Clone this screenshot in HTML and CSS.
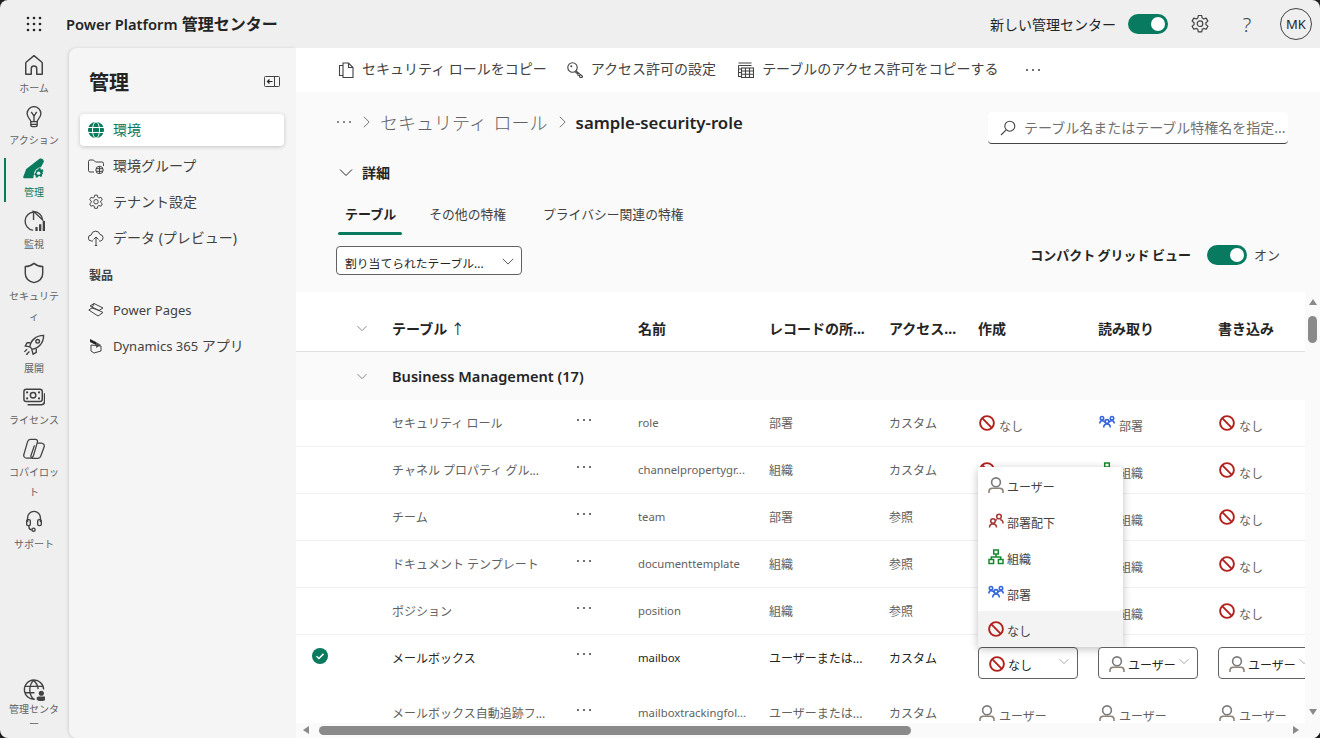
FILE: index.html
```html
<!DOCTYPE html>
<html>
<head>
  <title>Power Platform 管理センター</title>
  <link rel="stylesheet" href="styles.css">
</head>
<body>
  <svg class="icon-defs" width="0" height="0">
    <symbol id="ic-none" viewBox="0 0 16 16">
      <circle cx="8" cy="8" r="6.900" fill="none" stroke="#b3201c" stroke-width="1.900"/>
      <path d="M3.200 3.200l9.600 9.600" stroke="#b3201c" stroke-width="1.900"/>
    </symbol>
    <symbol id="ic-user" viewBox="0 0 16 16">
      <circle cx="8" cy="5.300" r="4.400" fill="none" stroke="#7a7a7a" stroke-width="1.600"/>
      <path d="M1 16v-1.500c0-2 1.400-3.300 3.200-3.300h7.600c1.800 0 3.200 1.300 3.200 3.300V16" fill="none" stroke="#8f8378" stroke-width="1.600"/>
    </symbol>
    <symbol id="ic-unit" viewBox="0 0 16 16">
      <g fill="none" stroke="#3566dc" stroke-width="1.600">
        <circle cx="3" cy="3.200" r="1.700"/><circle cx="13" cy="3.200" r="1.700"/><circle cx="8" cy="6.500" r="1.900"/>
        <path d="M.8 8.500c0-1.500.6-2.700 2.200-2.700 1.100 0 2 .5 3.200 1.100M15.200 8.500c0-1.500-.6-2.700-2.200-2.700-1.100 0-2 .5-3.200 1.100M4.700 12.500c0-2 1.300-3.500 3.300-3.500s3.300 1.500 3.300 3.500"/>
      </g>
    </symbol>
    <symbol id="ic-sub" viewBox="0 0 16 16">
      <g fill="none" stroke="#a83a3a" stroke-width="1.600">
        <circle cx="11" cy="3.500" r="2.300"/><circle cx="5" cy="8" r="2.300"/>
        <path d="M9 6.800c-.5 0-1 .2-1.300.5M15 10.500c0-2-1-3.700-2.800-3.700M1.500 14.500c0-2 1.400-3.500 3.500-3.500s3.500 1.500 3.500 3.500"/>
      </g>
    </symbol>
    <symbol id="ic-org" viewBox="0 0 16 16">
      <g fill="none" stroke="#17882f" stroke-width="1.500">
        <rect x="5.700" y="1" width="4.600" height="4"/><rect x="1" y="10.500" width="4.600" height="4"/><rect x="10.400" y="10.500" width="4.600" height="4"/>
        <path d="M8 5v3M3.300 10.500V8h9.400v2.500"/>
      </g>
    </symbol>
    <symbol id="ic-chevron" viewBox="0 0 16 16">
      <path d="M2 5.500l6 6 6-6" fill="none" stroke="currentColor" stroke-width="1"/>
    </symbol>
    <symbol id="ic-dots" viewBox="0 0 16 4">
      <circle cx="2" cy="2" r="1" fill="currentColor"/><circle cx="8" cy="2" r="1" fill="currentColor"/><circle cx="14" cy="2" r="1" fill="currentColor"/>
    </symbol>
    <symbol id="ic-gear" viewBox="0 0 20 20">
      <path d="M8.300 1.500h3.400l.5 2.600 1.500.9 2.500-.9 1.700 3-2 1.700v1.800l2 1.700-1.700 3-2.500-.9-1.500.9-.5 2.600H8.300l-.5-2.600-1.500-.9-2.500.9-1.700-3 2-1.700V8.800l-2-1.700 1.700-3 2.500.9 1.500-.9z" fill="none" stroke="currentColor" stroke-width="1.200" stroke-linejoin="round"/>
      <circle cx="10" cy="9.700" r="2.800" fill="none" stroke="currentColor" stroke-width="1.200"/>
    </symbol>
  </svg>

  <div class="shell">
    <header class="top-bar">
      <svg class="launcher" viewBox="0 0 16 16" width="16" height="16" fill="#242424">
        <circle cx="2" cy="2" r="1.300"/><circle cx="8" cy="2" r="1.300"/><circle cx="14" cy="2" r="1.300"/>
        <circle cx="2" cy="8" r="1.300"/><circle cx="8" cy="8" r="1.300"/><circle cx="14" cy="8" r="1.300"/>
        <circle cx="2" cy="14" r="1.300"/><circle cx="8" cy="14" r="1.300"/><circle cx="14" cy="14" r="1.300"/>
      </svg>
      <div class="app-title"><span class="app-brand">Power Platform</span> 管理センター</div>
      <div class="top-right">
        <span class="top-label">新しい管理センター</span>
        <span class="toggle"></span>
        <svg class="top-gear" width="20" height="20"><use href="#ic-gear"/></svg>
        <span class="help">?</span>
        <span class="avatar">MK</span>
      </div>
    </header>

    <div class="body-row">
      <nav class="rail">
        <div class="rail-top">
          <a class="rail-item">
            <svg class="rail-icon" viewBox="0 0 24 24"><path d="M3 22V10.200a2 2 0 0 1 .7-1.500L12 1.800l8.300 6.900a2 2 0 0 1 .7 1.500V22h-6v-6a3 3 0 0 0-6 0v6z" fill="none" stroke="currentColor" stroke-width="1.600" stroke-linejoin="round"/></svg>
            <span>ホーム</span>
          </a>
          <a class="rail-item">
            <svg class="rail-icon" viewBox="0 0 24 24"><g fill="none" stroke="currentColor" stroke-width="1.500"><path d="M8.500 17c0-2.500-4-4-4-8.800a7.500 7.500 0 0 1 15 0c0 4.800-4 6.300-4 8.800z"/><path d="M8.500 17v3.500a2 2 0 0 0 2 2h3a2 2 0 0 0 2-2V17M12 16.500V11M9 6.500L12 11l3-4.500M8.500 20h7"/></g></svg>
            <span>アクション</span>
          </a>
          <a class="rail-item active">
            <svg class="rail-icon" viewBox="0 0 24 24"><path d="M18 .8c2.500-1.300 5.500 1 4.500 3.700L19.500 10c-3.500.2-7 3-7.500 7l-.8 5H1.500c-.9 0-1.500-.7-1.200-1.500l3.200-8.500z" fill="currentColor"/><path d="M17.500 10.800l1.700.4.400 1.600 1.700-.4 1.100 1.700-1.100 1.300.5 1.600-1.200 1.300.3 1.700-1.600.8-1.200-1.100-1.600.4-1 1.400-1.700-.6v-1.700l-1.500-.9.400-1.700 1.300-.9-.2-1.700 1.500-.9z" fill="currentColor"/><circle cx="17" cy="16.500" r="1.900" fill="#efefef"/></svg>
            <span>管理</span>
          </a>
          <a class="rail-item">
            <svg class="rail-icon" viewBox="0 0 24 24"><g fill="none" stroke="currentColor" stroke-width="1.500"><path d="M11.500 11V2.200A10 10 0 0 0 10.500 22h.5M11.500 1.500a10.500 10.500 0 0 1 10 9.500z"/></g><path d="M13.500 18.500h2.500V23h-2.500zM17.500 15.500H20V23h-2.500zM21.500 12H24v11h-2.500z" fill="currentColor"/></svg>
            <span>監視</span>
          </a>
          <a class="rail-item">
            <svg class="rail-icon" viewBox="0 0 24 24"><path d="M12 1.500c2.800 2.300 6 3.500 9.500 3.500v7.500c0 5-3.500 8.500-9.500 10-6-1.500-9.500-5-9.500-10V5C6 5 9.200 3.800 12 1.500z" fill="none" stroke="currentColor" stroke-width="1.600" stroke-linejoin="round"/></svg>
            <span>セキュリティ</span>
          </a>
          <a class="rail-item">
            <svg class="rail-icon" viewBox="0 0 24 24"><g fill="none" stroke="currentColor" stroke-width="1.500"><path d="M7.500 14C8 7.500 14 1.500 22.500 1.500c0 8.500-6 14.500-12.500 15z"/><circle cx="16" cy="8" r="2"/><path d="M8 9.500H4.500L2.500 13l5 1M14.500 16v4l-3.500 2-1.500-5.500"/><path d="M4.500 16.500L1.500 19.500M7 19l-3.500 3.500M5 21.500l-1 1"/></g></svg>
            <span>展開</span>
          </a>
          <a class="rail-item">
            <svg class="rail-icon" viewBox="0 0 24 24"><g fill="none" stroke="currentColor" stroke-width="1.600"><rect x="1" y="3.500" width="20" height="13.500" rx="2.500"/><circle cx="11" cy="10.200" r="3"/><path d="M23.500 8v9a3.500 3.500 0 0 1-3.500 3.500H5"/></g><circle cx="4.500" cy="7" r="1.200" fill="currentColor"/><circle cx="17.500" cy="7" r="1.200" fill="currentColor"/><circle cx="4.500" cy="13.500" r="1.200" fill="currentColor"/><circle cx="17.500" cy="13.500" r="1.200" fill="currentColor"/></svg>
            <span>ライセンス</span>
          </a>
          <a class="rail-item">
            <svg class="rail-icon" viewBox="0 0 24 24"><g fill="none" stroke="currentColor" stroke-width="1.400"><path d="M8 1.500h5.500c1.800 0 2.700 1.300 2.200 3L11.500 19c-.5 1.800-1.500 3-3.500 3H4c-2.300 0-3.700-2-3-4.200L5 4c.5-1.500 1.700-2.500 3-2.500z"/><path d="M15.500 5.500h4.500c2.300 0 3.800 2.200 3 4.400L19.300 20c-.5 1.300-1.500 2.200-3 2.200H11c-2 0-2.800-1.500-2.200-3.300L12.500 8"/></g></svg>
            <span>コパイロット</span>
          </a>
          <a class="rail-item">
            <svg class="rail-icon" viewBox="0 0 24 24"><g fill="none" stroke="currentColor" stroke-width="1.500"><path d="M5 13V8.500a7 7 0 0 1 14 0V13"/><rect x="4" y="10.500" width="4" height="6.500" rx="1.500"/><rect x="16" y="10.500" width="4" height="6.500" rx="1.500"/><path d="M6.500 17v1.500a3 3 0 0 0 3 3"/><circle cx="11.500" cy="21.500" r="1.700"/></g></svg>
            <span>サポート</span>
          </a>
        </div>
        <a class="rail-item rail-bottom">
          <svg class="rail-icon" viewBox="0 0 24 24"><g fill="none" stroke="currentColor" stroke-width="1.500"><path d="M13 22A10.500 10.500 0 1 1 22.500 11.500M1.500 8h21M1.500 15h11M11.500 1.500c-5.500 5.500-5.500 15 0 20.500M11.500 1.500c3 2.500 4.700 6 5 9.500"/></g><circle cx="20" cy="15.500" r="2.800" fill="currentColor"/><path d="M14.800 21.500c0-1.500 1-2.500 2.400-2.500h5.600c1.200 0 2.200 1 2.200 2.500S23 24 20 24s-5.200-1-5.200-2.500z" fill="currentColor"/></svg>
          <span>管理センター</span>
        </a>
      </nav>

      <aside class="side-nav">
        <div class="side-head">
          <h2>管理</h2>
          <svg class="collapse" viewBox="0 0 16 12" width="16" height="12"><rect x=".5" y=".5" width="15" height="10" rx="1" fill="none" stroke="#424242"/><path d="M10.500 0v11" stroke="#424242"/><path d="M8.500 5.500h-5M5.500 3.500l-2 2 2 2" fill="none" stroke="#242424" stroke-width="1.200"/></svg>
        </div>
        <a class="side-item selected">
          <svg viewBox="0 0 16 16" width="16" height="16"><circle cx="8" cy="8" r="8" fill="#0a7a5e"/><g fill="none" stroke="#fff" stroke-width="1"><path d="M0 5.500h16M0 10.500h16"/><ellipse cx="8" cy="8" rx="3.500" ry="8"/></g></svg>
          <span>環境</span>
        </a>
        <a class="side-item">
          <svg viewBox="0 0 16 16" width="16" height="16"><g fill="none" stroke="#424242" stroke-width="1"><path d="M6 14H2a1.500 1.500 0 0 1-1.500-1.500v-9A1.500 1.500 0 0 1 2 2h3.500l2 2H14a1.500 1.500 0 0 1 1.500 1.500V8"/><circle cx="11.500" cy="12" r="3.700"/><path d="M8 10.700h7M8 13.300h7M11.500 8.300v7.400"/></g></svg>
          <span>環境グループ</span>
        </a>
        <a class="side-item">
          <svg width="16" height="16"><use href="#ic-gear"/></svg>
          <span>テナント設定</span>
        </a>
        <a class="side-item">
          <svg viewBox="0 0 16 16" width="16" height="16"><g fill="none" stroke="#424242" stroke-width="1"><path d="M5 11H3.500a3 3 0 0 1-.3-6A4.500 4.500 0 0 1 12 4.500a3.300 3.300 0 0 1 .5 6.500H11"/><path d="M8 15.500V7M5.500 9.500L8 7l2.500 2.500M6.800 15.500h2.400"/></g></svg>
          <span>データ (プレビュー)</span>
        </a>
        <div class="side-group">製品</div>
        <a class="side-item">
          <svg viewBox="0 0 16 16" width="16" height="16"><g fill="none" stroke="#424242" stroke-width="1" stroke-linejoin="round"><path d="M6 1.500L15 6l-4 2.500L2 4z"/><path d="M4 6L.8 8 10 14l5-3.500-4-2"/><path d="M6 1.500L4 6l7 2.500"/></g></svg>
          <span><span class="side-latin">Power Pages</span></span>
        </a>
        <a class="side-item">
          <svg viewBox="0 0 16 16" width="16" height="16"><path d="M2 1l6 3v3L2 4z" fill="#242424"/><path d="M8 4l5 3-5 3z" fill="#555"/><path d="M3 7l10 1v5L6 15l-3-2z" fill="none" stroke="#424242"/></svg>
          <span><span class="side-latin">Dynamics 365</span> アプリ</span>
        </a>
      </aside>

      <main class="main">
        <div class="command-bar">
          <a class="command">
            <svg viewBox="0 0 16 16" width="16" height="16"><g fill="none" stroke="#424242" stroke-width="1.100"><path d="M5 3.500H1.500v10H5"/><path d="M5 1h5.500L15 5.500V15.500H5z"/><path d="M10.500 1v4.500H15"/></g></svg>
            <span>セキュリティ ロールをコピー</span>
          </a>
          <a class="command">
            <svg viewBox="0 0 16 16" width="16" height="16"><g fill="none" stroke="#424242" stroke-width="1.100"><circle cx="5.500" cy="5.500" r="4.700"/><path d="M8.700 8.700l7 5.800-1 1.200-1.900-.5-.2-1.700-1.600-.3-.2-1.500-2.500-1.500"/></g><circle cx="4.300" cy="4.300" r="1" fill="#424242"/></svg>
            <span>アクセス許可の設定</span>
          </a>
          <a class="command">
            <svg viewBox="0 0 16 16" width="16" height="16"><g fill="none" stroke="#424242" stroke-width="1.100"><path d="M.5 1h13M.5 3.500h13M.5 3.500v11h3"/><rect x="3.500" y="6" width="12" height="9.500"/><path d="M3.500 9h12M3.500 12.200h12M7.500 6v9.500M11.500 6v9.500M.5 7h3M.5 10.500h3"/></g></svg>
            <span>テーブルのアクセス許可をコピーする</span>
          </a>
          <svg class="command-more" width="16" height="4"><use href="#ic-dots"/></svg>
        </div>

        <section class="detail">
          <div class="detail-top">
            <div class="crumbs">
              <svg class="crumb-more" width="16" height="4"><use href="#ic-dots"/></svg>
              <svg class="crumb-sep" viewBox="0 0 8 14" width="7" height="14"><path d="M1 1l6 6-6 6" fill="none" stroke="#616161"/></svg>
              <span class="crumb">セキュリティ ロール</span>
              <svg class="crumb-sep" viewBox="0 0 8 14" width="7" height="14"><path d="M1 1l6 6-6 6" fill="none" stroke="#616161"/></svg>
              <span class="crumb-current">sample-security-role</span>
            </div>
            <div class="search">
              <svg viewBox="0 0 16 16" width="16" height="16"><g fill="none" stroke="#424242" stroke-width="1.100"><circle cx="9.800" cy="6.200" r="5"/><path d="M6.200 9.800L1 15"/></g></svg>
              <span>テーブル名またはテーブル特権名を指定...</span>
            </div>
          </div>
          <div class="detail-toggle">
            <svg width="16" height="16"><use href="#ic-chevron"/></svg>
            <span>詳細</span>
          </div>
          <div class="tabs">
            <a class="tab current">テーブル</a>
            <a class="tab">その他の特権</a>
            <a class="tab">プライバシー関連の特権</a>
          </div>
          <div class="filter-row">
            <div class="filter">
              <span class="filter-text">割り当てられたテーブル...</span>
              <svg width="14" height="14"><use href="#ic-chevron"/></svg>
            </div>
            <div class="compact">
              <span class="compact-label">コンパクト グリッド ビュー</span>
              <span class="toggle"></span>
              <span>オン</span>
            </div>
          </div>
        </section>

        <section class="grid-area">
          <div class="grid-top">
            <div class="grid-clip">
              <div class="row head">
                <div class="first"><svg width="12" height="12"><use href="#ic-chevron"/></svg></div>
                <div>テーブル <span class="sort">↑</span></div>
                <div>名前</div>
                <div>レコードの所...</div>
                <div>アクセス...</div>
                <div>作成</div>
                <div>読み取り</div>
                <div>書き込み</div>
              </div>
              <div class="row group">
                <div class="first"><svg width="12" height="12"><use href="#ic-chevron"/></svg></div>
                <div class="group-name">Business Management (17)</div>
              </div>

              <div class="row item">
                <div class="first"></div>
                <div class="name-cell"><span class="name">セキュリティ ロール</span><svg class="more" width="16" height="4"><use href="#ic-dots"/></svg></div>
                <div class="logical">role</div>
                <div>部署</div>
                <div>カスタム</div>
                <div class="level"><svg><use href="#ic-none"/></svg><span>なし</span></div>
                <div class="level"><svg><use href="#ic-unit"/></svg><span>部署</span></div>
                <div class="level"><svg><use href="#ic-none"/></svg><span>なし</span></div>
              </div>
              <div class="row item">
                <div class="first"></div>
                <div class="name-cell"><span class="name">チャネル プロパティ グル...</span><svg class="more" width="16" height="4"><use href="#ic-dots"/></svg></div>
                <div class="logical">channelpropertygr...</div>
                <div>組織</div>
                <div>カスタム</div>
                <div class="level"><svg><use href="#ic-none"/></svg></div>
                <div class="level"><svg><use href="#ic-org"/></svg><span>組織</span></div>
                <div class="level"><svg><use href="#ic-none"/></svg><span>なし</span></div>
              </div>
              <div class="row item">
                <div class="first"></div>
                <div class="name-cell"><span class="name">チーム</span><svg class="more" width="16" height="4"><use href="#ic-dots"/></svg></div>
                <div class="logical">team</div>
                <div>部署</div>
                <div>参照</div>
                <div class="level"></div>
                <div class="level"><svg><use href="#ic-org"/></svg><span>組織</span></div>
                <div class="level"><svg><use href="#ic-none"/></svg><span>なし</span></div>
              </div>
              <div class="row item">
                <div class="first"></div>
                <div class="name-cell"><span class="name">ドキュメント テンプレート</span><svg class="more" width="16" height="4"><use href="#ic-dots"/></svg></div>
                <div class="logical">documenttemplate</div>
                <div>組織</div>
                <div>参照</div>
                <div class="level"></div>
                <div class="level"><svg><use href="#ic-org"/></svg><span>組織</span></div>
                <div class="level"><svg><use href="#ic-none"/></svg><span>なし</span></div>
              </div>
              <div class="row item">
                <div class="first"></div>
                <div class="name-cell"><span class="name">ポジション</span><svg class="more" width="16" height="4"><use href="#ic-dots"/></svg></div>
                <div class="logical">position</div>
                <div>組織</div>
                <div>参照</div>
                <div class="level"></div>
                <div class="level"><svg><use href="#ic-org"/></svg><span>組織</span></div>
                <div class="level"><svg><use href="#ic-none"/></svg><span>なし</span></div>
              </div>

              <div class="row item active-row">
                <div class="first">
                  <svg class="check" viewBox="0 0 16 16" width="16" height="16"><circle cx="8" cy="8" r="8" fill="#0a7a5e"/><path d="M4.500 8.300l2.400 2.200 4.600-4.600" fill="none" stroke="#fff" stroke-width="1.500"/></svg>
                </div>
                <div class="name-cell"><span class="name">メールボックス</span><svg class="more" width="16" height="4"><use href="#ic-dots"/></svg></div>
                <div class="logical">mailbox</div>
                <div class="plain-cell">ユーザーまたは...</div>
                <div class="plain-cell">カスタム</div>
                <div class="picker-cell">
                  <div class="picker">
                    <svg class="level-icon"><use href="#ic-none"/></svg><span class="picker-text">なし</span>
                    <svg class="picker-arrow" width="12" height="12"><use href="#ic-chevron"/></svg>
                  </div>
                  <div class="menu">
                    <div class="menu-item"><svg class="level-icon"><use href="#ic-user"/></svg><span>ユーザー</span></div>
                    <div class="menu-item"><svg class="level-icon"><use href="#ic-sub"/></svg><span>部署配下</span></div>
                    <div class="menu-item"><svg class="level-icon"><use href="#ic-org"/></svg><span>組織</span></div>
                    <div class="menu-item"><svg class="level-icon"><use href="#ic-unit"/></svg><span>部署</span></div>
                    <div class="menu-item hover"><svg class="level-icon"><use href="#ic-none"/></svg><span>なし</span></div>
                  </div>
                </div>
                <div class="picker-cell">
                  <div class="picker">
                    <svg class="level-icon"><use href="#ic-user"/></svg><span class="picker-text">ユーザー</span>
                    <svg class="picker-arrow" width="12" height="12"><use href="#ic-chevron"/></svg>
                  </div>
                </div>
                <div class="picker-cell">
                  <div class="picker">
                    <svg class="level-icon"><use href="#ic-user"/></svg><span class="picker-text">ユーザー</span>
                    <svg class="picker-arrow" width="12" height="12"><use href="#ic-chevron"/></svg>
                  </div>
                </div>
              </div>

              <div class="row item">
                <div class="first"></div>
                <div class="name-cell"><span class="name">メールボックス自動追跡フ...</span><svg class="more" width="16" height="4"><use href="#ic-dots"/></svg></div>
                <div class="logical">mailboxtrackingfol...</div>
                <div>ユーザーまたは...</div>
                <div>カスタム</div>
                <div class="level"><svg><use href="#ic-user"/></svg><span>ユーザー</span></div>
                <div class="level"><svg><use href="#ic-user"/></svg><span>ユーザー</span></div>
                <div class="level"><svg><use href="#ic-user"/></svg><span>ユーザー</span></div>
              </div>
            </div>

            <div class="vscroll">
              <span class="arrow up"></span>
              <span class="vthumb"></span>
              <span class="arrow down"></span>
            </div>
          </div>
          <div class="hscroll">
            <span class="arrow left"></span>
            <span class="hthumb"></span>
            <span class="arrow right"></span>
          </div>
        </section>
      </main>
    </div>
  </div>
</body>
</html>
```

FILE: styles.css
```css
html {
  background-color: #1f1f1f;
}
body {
  margin: 0;
  width: 1320px;
  height: 738px;
  overflow: hidden;
  font-family: "Noto Sans", "Noto Sans CJK JP", sans-serif;
  font-size: 14px;
  color: #242424;
}
a {
  color: inherit;
  text-decoration: none;
}
.icon-defs {
  position: absolute;
}
.shell {
  display: flex;
  flex-direction: column;
  height: 738px;
  background-color: #efefef;
  border-radius: 8px;
  overflow: hidden;
}

/* top bar */
.top-bar {
  display: flex;
  align-items: center;
  flex: none;
  height: 48px;
  padding: 0 8px 0 26px;
}
.launcher {
  margin-right: 24px;
}
.app-title {
  font-size: 16px;
  font-weight: 600;
  margin-top: -2px;
}
.app-brand {
  font-size: 14.700px;
}
.top-right {
  display: flex;
  align-items: center;
  margin-left: auto;
}
.top-label {
  margin-right: 12px;
}
.toggle {
  position: relative;
  display: inline-block;
  width: 40px;
  height: 20px;
  border-radius: 10px;
  background-color: #077a5f;
}
.toggle::after {
  content: "";
  position: absolute;
  top: 3px;
  right: 3px;
  width: 14px;
  height: 14px;
  border-radius: 50%;
  background-color: #fff;
}
.top-gear {
  margin-left: 22px;
  color: #424242;
}
.help {
  width: 20px;
  margin-left: 27px;
  text-align: center;
  font-size: 20px;
  font-weight: 300;
  color: #424242;
}
.avatar {
  width: 30px;
  height: 30px;
  margin-left: 23px;
  border: 1px solid #424242;
  border-radius: 50%;
  text-align: center;
  line-height: 31px;
  font-size: 13px;
  color: #242424;
}

.body-row {
  display: flex;
  flex: 1;
  min-height: 0;
}

/* left rail */
.rail {
  display: flex;
  flex-direction: column;
  justify-content: space-between;
  flex: none;
  width: 69px;
  padding-bottom: 6px;
  box-sizing: border-box;
}
.rail-item {
  position: relative;
  display: block;
  width: 52px;
  margin-left: 8px;
  padding: 6px 0 2px;
  box-sizing: border-box;
  text-align: center;
  font-size: 10px;
  line-height: 20px;
  color: #616161;
  overflow-wrap: anywhere;
}
.rail-icon {
  display: block;
  width: 22px;
  height: 22px;
  margin: 0 auto 2px;
  color: #424242;
}
.rail-item.active {
  color: #0a7a5e;
}
.rail-item.active .rail-icon {
  color: #0a7a5e;
}
.rail-item.active::before {
  content: "";
  position: absolute;
  left: -4px;
  top: 6px;
  width: 2px;
  height: 44px;
  background-color: #0a7a5e;
}
.rail-bottom {
  padding-bottom: 0;
  line-height: 15px;
}
.rail-bottom .rail-icon {
  margin-bottom: 1px;
}

/* side navigation */
.side-nav {
  flex: none;
  width: 227px;
  padding: 0 12px 0 11px;
  box-sizing: border-box;
  background-color: #f5f5f5;
  border-radius: 8px 0 0 8px;
  box-shadow: -1px 0 3px rgba(0, 0, 0, 0.12);
}
.side-head {
  display: flex;
  align-items: center;
  justify-content: space-between;
  height: 66px;
  padding: 0 4px 0 9px;
  box-sizing: border-box;
}
.side-head h2 {
  margin: 0;
  font-size: 20px;
  font-weight: 600;
}
.collapse {
  margin-top: 1px;
}
.side-item {
  display: flex;
  align-items: center;
  gap: 9px;
  height: 32px;
  margin-bottom: 4px;
  padding-left: 8px;
  color: #424242;
}
.side-item > span {
  padding-bottom: 2px;
}
.side-item svg {
  flex: none;
  color: #424242;
}
.side-latin {
  font-size: 13px;
}
.side-item.selected {
  background-color: #fff;
  border-radius: 4px;
  box-shadow: 0 1px 4px rgba(0, 0, 0, 0.2);
  color: #0a7a5e;
}
.side-group {
  height: 18px;
  margin: 13px 0 9px;
  padding-left: 9px;
  font-size: 12px;
  font-weight: 600;
  line-height: 18px;
  color: #424242;
}

/* main */
.main {
  display: flex;
  flex-direction: column;
  flex: 1;
  min-width: 0;
  background-color: #fff;
}
.command-bar {
  display: flex;
  align-items: center;
  flex: none;
  height: 44px;
  padding-left: 42px;
}
.command {
  display: flex;
  align-items: center;
  gap: 8px;
  margin-right: 20px;
  color: #424242;
}
.command + .command {
  margin-right: 22px;
}
.command span {
  padding-bottom: 5px;
}
.command-more {
  margin-left: 4px;
  color: #424242;
}

.detail {
  flex: none;
  height: 200px;
  padding: 20px 32px 0 40px;
  box-sizing: border-box;
  background-color: #fafafa;
}
.detail-top {
  display: flex;
  align-items: center;
  justify-content: space-between;
  height: 32px;
}
.crumbs {
  display: flex;
  align-items: center;
  gap: 10px;
  margin-top: -12px;
}
.crumb-more {
  color: #616161;
}
.crumb {
  font-size: 18px;
  font-weight: 300;
  word-spacing: 2px;
  color: #616161;
}
.crumb-sep {
  margin-left: 1px;
}
.crumb-current {
  font-size: 16.800px;
  font-weight: 600;
}
.search {
  display: flex;
  align-items: center;
  gap: 8px;
  width: 300px;
  height: 32px;
  padding-left: 12px;
  box-sizing: border-box;
  background-color: #fff;
  border-bottom: 1px solid #424242;
  border-radius: 4px;
  color: #707070;
  white-space: nowrap;
}
.search span {
  padding-bottom: 2px;
}
.detail-toggle {
  display: flex;
  align-items: center;
  gap: 8px;
  margin: 16px 0 0 2px;
  height: 24px;
  font-weight: 600;
}
.detail-toggle svg {
  color: #242424;
}
.tabs {
  display: flex;
  margin-top: 14px;
  margin-left: 2px;
}
.tab {
  position: relative;
  padding: 0 20px 0 7px;
  margin-right: 10px;
  font-size: 12.800px;
  line-height: 32px;
  color: #424242;
}
.tab.current {
  margin-right: 20px;
  padding-right: 6px;
  font-size: 13px;
  font-weight: 700;
  color: #242424;
}
.tab.current::after {
  content: "";
  position: absolute;
  left: 0;
  right: 0;
  bottom: -5px;
  height: 3px;
  border-radius: 2px;
  background-color: #0a7a5e;
}
.filter-row {
  display: flex;
  align-items: center;
  justify-content: space-between;
  margin-top: 16px;
}
.filter {
  display: flex;
  align-items: center;
  justify-content: space-between;
  width: 186px;
  height: 29px;
  padding: 0 6px 0 8px;
  box-sizing: border-box;
  background-color: #fff;
  border: 1px solid #616161;
  border-radius: 4px;
  font-size: 11.800px;
  white-space: nowrap;
}
.filter-text {
  padding-top: 3px;
}
.filter svg {
  color: #424242;
}
.compact {
  display: flex;
  align-items: center;
  font-size: 13px;
  margin-top: -12px;
  margin-right: 8px;
  color: #424242;
}
.compact-label {
  margin-right: 16px;
  font-weight: 700;
  word-spacing: -1px;
  color: #242424;
}
.compact .toggle {
  margin-right: 7px;
}

/* grid */
.grid-area {
  display: flex;
  flex-direction: column;
  flex: 1;
  min-height: 0;
}
.grid-top {
  display: flex;
  flex: 1;
  min-height: 0;
}
.grid-clip {
  flex: 1;
  min-width: 0;
  overflow: hidden;
}
.row {
  display: grid;
  grid-template-columns: 96px 246px 131px 120px 89px 120px 120px 120px;
  align-items: center;
  width: 1042px;
  box-sizing: border-box;
  font-size: 12px;
  color: #616161;
}
.first {
  display: flex;
  align-items: center;
  padding-left: 60px;
  color: #616161;
}
.head {
  height: 60px;
  padding-top: 12px;
  border-bottom: 1px solid #e0e0e0;
  font-size: 14px;
  font-weight: 700;
  white-space: nowrap;
  color: #242424;
}
.sort {
  font-weight: 400;
}
.group {
  height: 48px;
  background-color: #fafafa;
}
.group-name {
  grid-column: 2 / 6;
  font-size: 14.600px;
  font-weight: 600;
  color: #242424;
}
.item {
  height: 47px;
  border-bottom: 1px solid #f0f0f0;
}
.name-cell {
  display: flex;
  align-items: center;
}
.name {
  width: 184px;
  white-space: nowrap;
  overflow: hidden;
}
.more {
  margin-top: -7px;
  color: #424242;
}
.logical {
  padding-bottom: 2px;
  font-size: 11.300px;
}
.level {
  display: flex;
  align-items: center;
  gap: 4px;
  padding-left: 1px;
  padding-top: 2px;
}
.level svg {
  flex: none;
  width: 16px;
  height: 16px;
  margin-top: -2px;
}
.level span {
  margin-top: 3px;
}
.active-row {
  height: 55px;
  border-bottom: 0;
  color: #242424;
}
.active-row .first {
  padding-left: 16px;
  padding-bottom: 14px;
}
.active-row .name-cell,
.active-row .logical,
.active-row .plain-cell {
  padding-bottom: 10px;
}
.picker-cell {
  position: relative;
}
.picker {
  display: flex;
  align-items: center;
  width: 100px;
  height: 32px;
  padding-left: 10px;
  box-sizing: border-box;
  background-color: #fff;
  border: 1px solid #616161;
  border-radius: 4px;
}
.level-icon {
  flex: none;
  width: 16px;
  height: 16px;
  margin-right: 3px;
}
.picker .level-icon {
  margin-top: 3px;
}
.picker-text {
  margin-top: 5px;
}
.picker-arrow {
  position: absolute;
  left: 80px;
  top: 8px;
  color: #8a8a8a;
}
.menu {
  position: absolute;
  left: 0;
  bottom: 100%;
  width: 145px;
  background-color: #fff;
  border-radius: 2px;
  box-shadow: 0 2px 8px rgba(0, 0, 0, 0.25);
}
.menu-item {
  display: flex;
  align-items: center;
  height: 36px;
  padding-left: 10px;
  color: #424242;
}
.menu-item span {
  margin-top: 4px;
}
.menu-item.hover {
  background-color: #f3f3f3;
}

/* scrollbars */
.vscroll {
  position: relative;
  flex: none;
  width: 15px;
  background-color: #fafafa;
}
.hscroll {
  position: relative;
  flex: none;
  height: 15px;
  background-color: #fafafa;
}
.arrow {
  position: absolute;
  width: 0;
  height: 0;
  border: 4px solid transparent;
}
.arrow.up {
  left: 4px;
  top: 7px;
  border-top: 0;
  border-bottom: 6px solid #8a8a8a;
}
.arrow.down {
  left: 4px;
  bottom: 8px;
  border-bottom: 0;
  border-top: 6px solid #8a8a8a;
}
.arrow.left {
  left: 7px;
  top: 3px;
  border-left: 0;
  border-right: 6px solid #8a8a8a;
}
.arrow.right {
  right: 21px;
  top: 3px;
  border-right: 0;
  border-left: 6px solid #8a8a8a;
}
.vthumb {
  position: absolute;
  left: 3px;
  top: 24px;
  width: 9px;
  height: 27px;
  border-radius: 5px;
  background-color: #8a8a8a;
}
.hthumb {
  position: absolute;
  left: 23px;
  top: 3px;
  width: 592px;
  height: 9px;
  border-radius: 5px;
  background-color: #8a8a8a;
}
```
